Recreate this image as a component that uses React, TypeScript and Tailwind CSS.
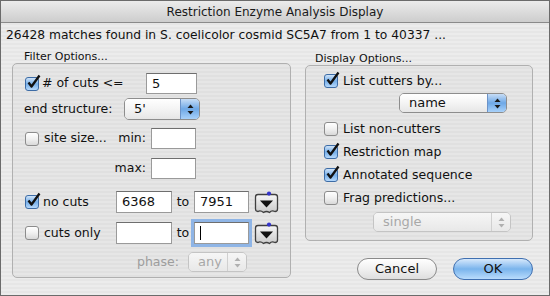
import React from "react";

function Check({ on }: { on?: boolean }) {
  return (
    <span className="relative inline-block w-[14px] h-[14px] shrink-0">
      <span
        className={`absolute inset-0 rounded-[3px] border ${
          on
            ? "border-[#3d6ca6] bg-gradient-to-b from-[#cfe3f8] via-[#75aee8] to-[#b5d8fb]"
            : "border-[#8c8c8c] bg-gradient-to-b from-[#ffffff] via-[#f0f0f0] to-[#d9d9d9]"
        }`}
      />
      {on && (
        <svg className="absolute left-[1px] -top-[3px]" width="15" height="15" viewBox="0 0 15 15">
          <path d="M2.5 8.5 L5.5 12.5 L13.5 1.5" fill="none" stroke="#111" strokeWidth="2.3" strokeLinejoin="round" />
        </svg>
      )}
    </span>
  );
}

function Field({ w, value, focus }: { w: string; value?: string; focus?: boolean }) {
  return (
    <div
      className={`${w} h-full bg-white border border-[#9a9a9a] border-t-[#6e6e6e] flex items-center pl-[5px] text-[13px] ${
        focus ? "ring-[3px] ring-[#8fb5e6] border-[#5d86bf]" : ""
      }`}
    >
      {value}
      {focus && <span className="w-px h-[14px] bg-black" />}
    </div>
  );
}

function Arrows({ color }: { color: string }) {
  return (
    <svg width="7" height="11" viewBox="0 0 7 11">
      <path d="M3.5 0.5 L6.5 4 L0.5 4 Z" fill={color} />
      <path d="M3.5 10.5 L6.5 7 L0.5 7 Z" fill={color} />
    </svg>
  );
}

function Popup({ w, value, disabled }: { w: string; value: string; disabled?: boolean }) {
  return (
    <div
      className={`${w} h-full flex rounded-[5px] border overflow-hidden ${
        disabled ? "border-[#c4c4c4] text-[#a8a8a8]" : "border-[#8d8d8d] text-[#111]"
      }`}
    >
      <div
        className={`flex-1 flex items-center text-[13px] pl-[9px] bg-gradient-to-b ${
          disabled ? "from-[#f6f6f6] to-[#e8e8e8]" : "from-[#ffffff] via-[#f4f4f4] to-[#e6e6e6]"
        }`}
      >
        {value}
      </div>
      <div
        className={`w-[19px] flex items-center justify-center border-l bg-gradient-to-b ${
          disabled
            ? "border-[#d0d0d0] from-[#f6f6f6] to-[#e8e8e8]"
            : "border-[#6c93c8] from-[#c7ddf6] via-[#6ea8e6] to-[#a8d1fa]"
        }`}
      >
        <Arrows color={disabled ? "#b0b0b0" : "#1a1a1a"} />
      </div>
    </div>
  );
}

function Stepper() {
  return (
    <svg width="25" height="23" viewBox="0 0 25 23" className="shrink-0">
      <defs>
        <linearGradient id="stp" x1="0" y1="0" x2="0" y2="1">
          <stop offset="0" stopColor="#f6f6f6" />
          <stop offset="1" stopColor="#cacaca" />
        </linearGradient>
      </defs>
      <path
        d="M1.5 6 Q1.5 3.5 4 3.5 L21 3.5 Q23.5 3.5 23.5 6 L23.5 18 Q23.5 20.5 21 20.5 Q17.5 19 15.5 21.5 Q12.5 19.5 9.5 21.5 Q6.5 19 4 20.5 Q1.5 20.5 1.5 18 Z"
        fill="url(#stp)"
        stroke="#3f3f3f"
        strokeWidth="1.3"
      />
      <path d="M6 9.5 L19 9.5 L12.5 16.5 Z" fill="#111" />
      <circle cx="15" cy="2.6" r="2.1" fill="#3434cc" />
    </svg>
  );
}

function Button({ label, primary }: { label: string; primary?: boolean }) {
  return (
    <div
      className={`w-[80px] h-full rounded-full border flex items-center justify-center text-[13px] text-[#111] bg-gradient-to-b ${
        primary
          ? "border-[#3f6fb0] from-[#d6e8fb] via-[#7ab4ec] to-[#b9dcfc]"
          : "border-[#8a8a8a] from-[#ffffff] via-[#f0f0f0] to-[#dedede]"
      }`}
    >
      {label}
    </div>
  );
}

export default function App() {
  return (
    <div className="w-[550px] h-[296px] border border-[#6b6b6b] flex flex-col overflow-hidden font-['DejaVu_Sans',sans-serif] text-[12.5px] text-[#111]">
      <div className="h-[22px] shrink-0 bg-gradient-to-b from-[#ececec] to-[#cdcdcd] border-b border-[#8a8a8a] flex items-center justify-center text-[12px] text-[#1a1a1a]">
        Restriction Enzyme Analysis Display
      </div>
      <div className="flex-1 flex flex-col bg-[repeating-linear-gradient(0deg,#ececec_0px,#ececec_2px,#e6e6e6_2px,#e6e6e6_4px)]">
        <div className="h-[24px] pl-[5px] flex items-center text-[12.3px]">
          26428 matches found in S. coelicolor cosmid SC5A7 from 1 to 40337 ...
        </div>
        <div className="flex">
          <div className="ml-[11px] w-[279px] flex flex-col">
            <div className="h-[16px] pl-[12px] flex items-end text-[11px] leading-[12px]">Filter Options...</div>
            <div className="h-[215px] rounded-[5px] border border-[#b0b0b0] bg-black/[0.025] flex flex-col">
              <div className="mt-[9px] h-[21px] flex items-center pl-[12px]">
                <div className="w-[121px] flex items-center">
                  <Check on />
                  <span className="ml-[3px]"># of cuts &lt;=</span>
                </div>
                <Field w="w-[51px]" value="5" />
              </div>
              <div className="mt-[4px] h-[22px] flex items-center pl-[11px]">
                <span className="w-[100px]">end structure:</span>
                <Popup w="w-[76px]" value="5'" />
              </div>
              <div className="mt-[8px] h-[21px] flex items-center pl-[12px]">
                <div className="w-[88px] flex items-center">
                  <Check />
                  <span className="ml-[5px]">site size...</span>
                </div>
                <span className="w-[38px] pr-[5px] text-right">min:</span>
                <Field w="w-[45px]" />
              </div>
              <div className="mt-[9px] h-[21px] flex items-center pl-[100px]">
                <span className="w-[38px] pr-[5px] text-right">max:</span>
                <Field w="w-[45px]" />
              </div>
              <div className="mt-[12px] h-[22px] flex items-center pl-[12px]">
                <div className="w-[91px] flex items-center">
                  <Check on />
                  <span className="ml-[4px]">no cuts</span>
                </div>
                <Field w="w-[56px]" value="6368" />
                <span className="w-[22px] text-center">to</span>
                <Field w="w-[55px]" value="7951" />
                <span className="ml-[5px]">
                  <Stepper />
                </span>
              </div>
              <div className="mt-[9px] h-[22px] flex items-center pl-[12px]">
                <div className="w-[91px] flex items-center">
                  <Check />
                  <span className="ml-[5px]">cuts only</span>
                </div>
                <Field w="w-[56px]" />
                <span className="w-[22px] text-center">to</span>
                <Field w="w-[55px]" focus />
                <span className="ml-[5px]">
                  <Stepper />
                </span>
              </div>
              <div className="mt-[8px] h-[20px] flex items-center pl-[124px]">
                <span className="w-[51px] text-[#9d9d9d]">phase:</span>
                <Popup w="w-[59px]" value="any" disabled />
              </div>
            </div>
          </div>
          <div className="ml-[14px] w-[228px] flex flex-col">
            <div className="h-[18px] pl-[10px] flex items-end text-[11px] leading-[12px]">Display Options...</div>
            <div className="h-[176px] rounded-[5px] border border-[#b0b0b0] bg-black/[0.025] flex flex-col">
              <div className="mt-[7px] h-[16px] flex items-center pl-[18px]">
                <Check on />
                <span className="ml-[5px]">List cutters by...</span>
              </div>
              <div className="mt-[4px] h-[20px] flex pl-[93px]">
                <Popup w="w-[108px]" value="name" />
              </div>
              <div className="mt-[8px] h-[16px] flex items-center pl-[18px]">
                <Check />
                <span className="ml-[5px]">List non-cutters</span>
              </div>
              <div className="mt-[7px] h-[16px] flex items-center pl-[18px]">
                <Check on />
                <span className="ml-[5px]">Restriction map</span>
              </div>
              <div className="mt-[7px] h-[16px] flex items-center pl-[18px]">
                <Check on />
                <span className="ml-[5px]">Annotated sequence</span>
              </div>
              <div className="mt-[7px] h-[16px] flex items-center pl-[18px]">
                <Check />
                <span className="ml-[5px]">Frag predictions...</span>
              </div>
              <div className="mt-[6px] h-[20px] flex pl-[67px]">
                <Popup w="w-[138px]" value="single" disabled />
              </div>
            </div>
            <div className="mt-[17px] h-[22px] flex justify-end gap-[16px]">
              <Button label="Cancel" />
              <Button label="OK" primary />
            </div>
          </div>
        </div>
      </div>
    </div>
  );
}
